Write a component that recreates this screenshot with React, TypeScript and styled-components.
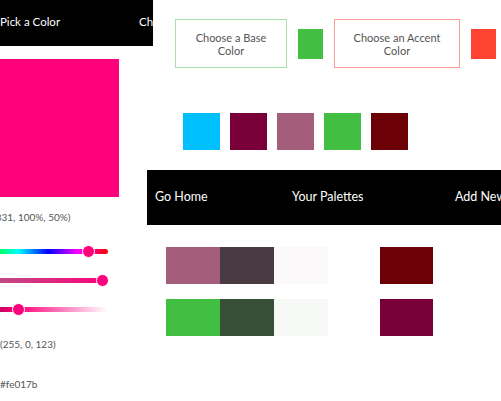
import React from "react";
import styled, { createGlobalStyle } from "styled-components";

const GlobalStyle = createGlobalStyle`
  html, body {
    margin: 0;
    padding: 0;
    background: #ffffff;
    font-family: "Lato", "Open Sans", sans-serif;
    overflow: hidden;
  }
`;

const base = "#fe017b";
const swatches = ["#00bfff", "#7a003a", "#a45e7c", "#42bf43", "#6b0006"];
const palettes = [
  { shades: ["#a45e7c", "#483c42", "#faf8f9"], accent: "#6b0006" },
  { shades: ["#42be43", "#364f36", "#f7f9f7"], accent: "#790039" },
];

const sliders = [
  {
    value: 331 / 360,
    gradient:
      "linear-gradient(to right, #ff0000, #ffff00, #00ff00, #00ffff, #0000ff, #ff00ff, #ff0000)",
  },
  {
    value: 1,
    gradient: "linear-gradient(to right, #808080, #c04a84 40%, #fe017b)",
  },
  {
    value: 0.5,
    gradient: "linear-gradient(to right, #000000, #fe017b 50%, #ffffff)",
  },
];

const Page = styled.div`
  display: flex;
  width: 501px;
  height: 401px;
`;

const LeftColumn = styled.div`
  width: 147px;
  flex-shrink: 0;
  display: flex;
  flex-direction: column;
`;

const PickerNav = styled.div`
  width: 153px;
  height: 46px;
  background: #000;
  color: #fff;
  display: flex;
  align-items: center;
  gap: 79px;
  overflow: hidden;
  white-space: nowrap;
  font-size: 11.5px;
  padding-bottom: 4px;
  box-sizing: border-box;
`;

const Preview = styled.div`
  width: 119px;
  height: 138px;
  margin-top: 13px;
  background: ${base};
`;

const Readout = styled.div<{ $shift?: number; $top: number }>`
  font-size: 10px;
  color: #555;
  margin-top: ${(p) => p.$top}px;
  margin-left: ${(p) => p.$shift ?? 0}px;
  white-space: nowrap;
  line-height: 12px;
`;

const SliderWrap = styled.div<{ $top: number }>`
  position: relative;
  width: 180px;
  height: 11px;
  margin-left: -72px;
  margin-top: ${(p) => p.$top}px;
`;

const Track = styled.div<{ $gradient: string }>`
  position: absolute;
  left: 0;
  right: 0;
  top: 3px;
  height: 5px;
  border-radius: 3px;
  background: ${(p) => p.$gradient};
`;

const Thumb = styled.div`
  position: absolute;
  top: -1px;
  width: 11px;
  height: 11px;
  margin-left: -6.5px;
  border-radius: 50%;
  background: ${base};
  border: 1px solid #fff;
`;

const RightColumn = styled.div`
  flex: 1;
  display: flex;
  flex-direction: column;
  min-width: 0;
`;

const ChooseRow = styled.div`
  display: flex;
  align-items: center;
  padding: 19px 0 0 28px;
`;

const ChooseButton = styled.div<{ $border: string; $width: number }>`
  width: ${(p) => p.$width}px;
  height: 49px;
  box-sizing: border-box;
  border: 1.5px solid ${(p) => p.$border};
  display: flex;
  align-items: center;
  justify-content: center;
  text-align: center;
  font-size: 11px;
  line-height: 13px;
  color: #555;
  padding: 0 14px;
`;

const ChosenColor = styled.div<{ $color: string; $margin: number }>`
  width: 25px;
  height: 30px;
  margin: 0 ${(p) => p.$margin}px 0 11px;
  background: ${(p) => p.$color};
  flex-shrink: 0;
`;

const SwatchRow = styled.div`
  display: flex;
  gap: 10px;
  padding-left: 36px;
  margin-top: 45px;
`;

const Swatch = styled.div<{ $color: string }>`
  width: 37px;
  height: 37px;
  background: ${(p) => p.$color};
`;

const MainNav = styled.div`
  margin-top: 20px;
  height: 55px;
  width: 360px;
  background: #000;
  color: #fff;
  display: flex;
  align-items: center;
  font-size: 12.5px;
  white-space: nowrap;
  padding-left: 8px;
  padding-bottom: 2px;
  box-sizing: border-box;
`;

const NavLink = styled.span<{ $width: number }>`
  width: ${(p) => p.$width}px;
  flex-shrink: 0;
`;

const PaletteList = styled.div`
  display: flex;
  flex-direction: column;
  gap: 15px;
  padding-left: 19px;
  margin-top: 22px;
`;

const PaletteRow = styled.div`
  display: flex;
`;

const Shade = styled.div<{ $color: string }>`
  width: 54px;
  height: 37px;
  background: ${(p) => p.$color};
`;

const Accent = styled(Shade)`
  width: 53px;
  margin-left: 52px;
`;

export default function App() {
  return (
    <>
      <GlobalStyle />
      <Page>
        <LeftColumn>
          <PickerNav>
            <span>Pick a Color</span>
            <span>Choose Palette</span>
          </PickerNav>
          <Preview />
          <Readout $top={14} $shift={-7}>
            (331, 100%, 50%)
          </Readout>
          {sliders.map((s, i) => (
            <SliderWrap key={i} $top={i === 0 ? 23 : 18}>
              <Track $gradient={s.gradient} />
              <Thumb style={{ left: `${5.5 + s.value * 169}px` }} />
            </SliderWrap>
          ))}
          <Readout $top={23}>(255, 0, 123)</Readout>
          <Readout $top={28}>#fe017b</Readout>
        </LeftColumn>
        <RightColumn>
          <ChooseRow>
            <ChooseButton $border="#a6e2a6" $width={112}>
              Choose a Base Color
            </ChooseButton>
            <ChosenColor $color="#42bf43" $margin={11} />
            <ChooseButton $border="#ff9c93" $width={126}>
              Choose an Accent Color
            </ChooseButton>
            <ChosenColor $color="#ff4433" $margin={0} />
          </ChooseRow>
          <SwatchRow>
            {swatches.map((c) => (
              <Swatch key={c} $color={c} />
            ))}
          </SwatchRow>
          <MainNav>
            <NavLink $width={137}>Go Home</NavLink>
            <NavLink $width={163}>Your Palettes</NavLink>
            <NavLink $width={60}>Add New</NavLink>
          </MainNav>
          <PaletteList>
            {palettes.map((p, i) => (
              <PaletteRow key={i}>
                {p.shades.map((c) => (
                  <Shade key={c} $color={c} />
                ))}
                <Accent $color={p.accent} />
              </PaletteRow>
            ))}
          </PaletteList>
        </RightColumn>
      </Page>
    </>
  );
}
